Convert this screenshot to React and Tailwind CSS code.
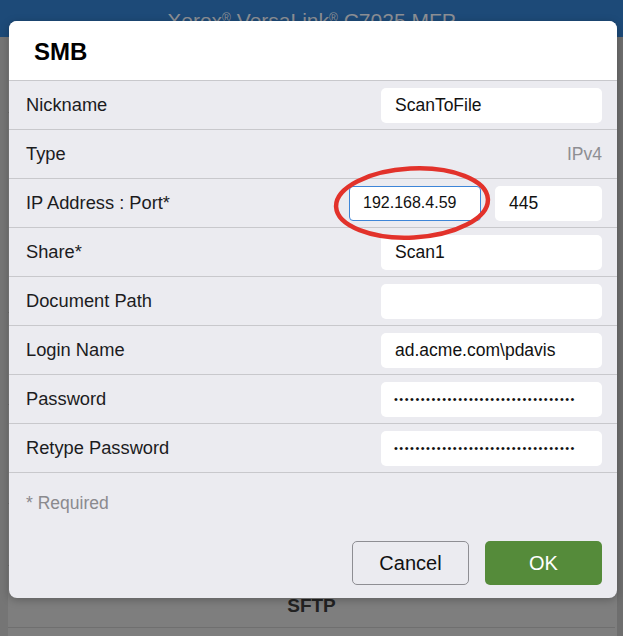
import React from "react";

const font = { fontFamily: '"Liberation Sans", Arial, Helvetica, sans-serif' };

function Row({ label, children }) {
  return (
    <div className="flex h-[49px] items-center justify-between border-b border-[#c8c8cc] pl-[17px] pr-[15px]">
      <span className="text-[18.3px] text-[#1c1c1e]">{label}</span>
      {children}
    </div>
  );
}

function Field({ value, className = "w-[221px]" }) {
  return (
    <div className={`flex h-[35px] items-center rounded-[5px] bg-white pl-[14px] text-[17.5px] text-[#111] ${className}`}>
      {value}
    </div>
  );
}

function Dots() {
  return (
    <div className="flex h-[35px] w-[221px] items-center overflow-hidden rounded-[5px] bg-white pl-[13px] text-[11px] tracking-[1.5px] text-[#111]">
      {"••••••••••••••••••••••••••••••••••"}
    </div>
  );
}

export default function App() {
  return (
    <div className="relative h-[636px] w-[623px] overflow-hidden bg-[#7e7e7e]" style={font}>
      {/* background page (dimmed) */}
      <div className="flex h-[37px] items-start justify-center bg-[#1d4a78] pt-[5px]">
        <span className="text-[21px] text-[#8c8f94]">
          Xerox<sup className="text-[12px]">®</sup> VersaLink<sup className="text-[12px]">®</sup> C7025 MFP
        </span>
      </div>
      <div className="flex flex-col">
        <div className="h-[76px] border-b border-[#6f6f6f]" />
        <div className="h-[200px] border-b border-[#6f6f6f]" />
        <div className="h-[92px] border-b border-[#6f6f6f]" />
        <div className="h-[99px] border-b border-[#6f6f6f]" />
        <div className="h-[62px] border-b border-[#6f6f6f]" />
        <div className="mx-[8px] flex h-[62px] items-center justify-center border-b border-[#6f6f6f] pt-[20px] text-[19px] font-bold text-[#222]">
          SFTP
        </div>
      </div>
      <div className="absolute left-0 top-[37px] h-full w-[8px] bg-[#757575]" />
      <div className="absolute right-0 top-[37px] h-full w-[6px] bg-[#6e6e6e]" />

      {/* dialog */}
      <div className="absolute left-[9px] top-[21px] flex h-[577px] w-[608px] flex-col overflow-hidden rounded-[8px] bg-[#ebebf0] shadow-[0_2px_8px_rgba(0,0,0,0.25)]">
        <div className="flex h-[60px] items-center border-b border-[#c8c8cc] bg-white pl-[25px] pt-[2px]">
          <span className="text-[24px] font-bold text-black">SMB</span>
        </div>
        <Row label="Nickname">
          <Field value="ScanToFile" />
        </Row>
        <Row label="Type">
          <span className="text-[17.5px] text-[#8e8e93]">IPv4</span>
        </Row>
        <Row label="IP Address : Port*">
          <div className="flex items-center gap-[14px]">
            <div className="relative">
              <div className="flex h-[35px] w-[132px] items-center rounded-[4px] border border-[#3d85d8] bg-white pl-[13px] text-[16px] text-[#111]">
                192.168.4.59
              </div>
              <svg className="pointer-events-none absolute left-[-17px] top-[-21px]" width="166" height="77" viewBox="0 0 166 77">
                <ellipse cx="80" cy="38" rx="76" ry="34.5" fill="none" stroke="#e2322b" strokeWidth="4.5" transform="rotate(-3 80 38)" />
              </svg>
            </div>
            <Field value="445" className="w-[107px]" />
          </div>
        </Row>
        <Row label="Share*">
          <Field value="Scan1" />
        </Row>
        <Row label="Document Path">
          <Field value="" />
        </Row>
        <Row label="Login Name">
          <Field value="ad.acme.com\pdavis" />
        </Row>
        <Row label="Password">
          <Dots />
        </Row>
        <Row label="Retype Password">
          <Dots />
        </Row>
        <div className="flex flex-1 flex-col pl-[17px] pr-[15px]">
          <span className="mt-[17px] text-[17.5px] text-[#8a8a8e]">* Required</span>
          <div className="mt-[25px] flex justify-end gap-[16px]">
            <button className="h-[44px] w-[117px] rounded-[5px] border border-[#8e8e93] bg-[#ebebf0] text-[20px] text-[#111]">
              Cancel
            </button>
            <button className="h-[44px] w-[117px] rounded-[5px] bg-[#558b3a] text-[20px] text-white">
              OK
            </button>
          </div>
        </div>
      </div>
    </div>
  );
}
